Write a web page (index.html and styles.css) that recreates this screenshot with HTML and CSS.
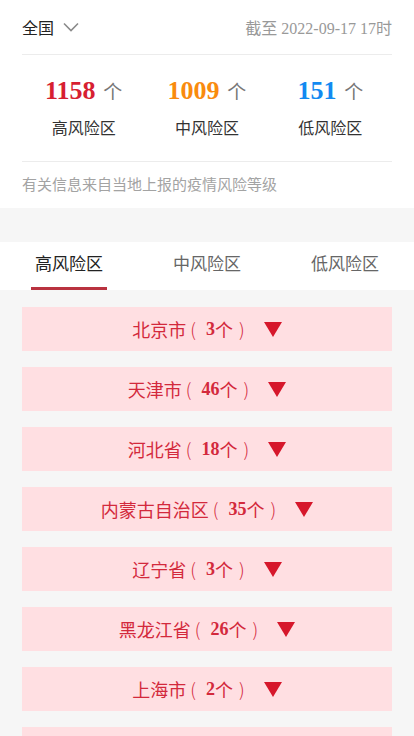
FILE: index.html
```html
<!DOCTYPE html>
<html lang="zh-CN">
<head>
    <meta charset="UTF-8">
    <meta name="viewport" content="width=device-width, initial-scale=1.0">
    <title>风险等级查询</title>
    <link rel="stylesheet" href="styles.css">
</head>
<body>
    <!-- 顶部汇总 -->
    <div class="summary">
        <div class="summary-head">
            <div class="region">全国
                <svg class="chevron" width="16" height="10" viewBox="0 0 16 10"><path d="M1 1.5 L8 8.5 L15 1.5" fill="none" stroke="#8a8a8a" stroke-width="1.6"/></svg>
            </div>
            <div class="update-time">截至 2022-09-17 17时</div>
        </div>
        <div class="stats">
            <div class="stat">
                <div class="stat-num"><b class="high">1158</b> 个</div>
                <div class="stat-label">高风险区</div>
            </div>
            <div class="stat">
                <div class="stat-num"><b class="mid">1009</b> 个</div>
                <div class="stat-label">中风险区</div>
            </div>
            <div class="stat">
                <div class="stat-num"><b class="low">151</b> 个</div>
                <div class="stat-label">低风险区</div>
            </div>
        </div>
        <div class="note">有关信息来自当地上报的疫情风险等级</div>
    </div>

    <!-- 风险等级切换 -->
    <div class="tabs">
        <div class="tab active">高风险区</div>
        <div class="tab">中风险区</div>
        <div class="tab">低风险区</div>
    </div>

    <div class="area-list">
        <div class="area">北京市<span class="open">(</span><b>3</b>个<span class="close">)</span><span class="arrow"></span></div>
        <div class="area">天津市<span class="open">(</span><b>46</b>个<span class="close">)</span><span class="arrow"></span></div>
        <div class="area">河北省<span class="open">(</span><b>18</b>个<span class="close">)</span><span class="arrow"></span></div>
        <div class="area">内蒙古自治区<span class="open">(</span><b>35</b>个<span class="close">)</span><span class="arrow"></span></div>
        <div class="area">辽宁省<span class="open">(</span><b>3</b>个<span class="close">)</span><span class="arrow"></span></div>
        <div class="area">黑龙江省<span class="open">(</span><b>26</b>个<span class="close">)</span><span class="arrow"></span></div>
        <div class="area">上海市<span class="open">(</span><b>2</b>个<span class="close">)</span><span class="arrow"></span></div>
        <div class="area">江苏省<span class="open">(</span><b>9</b>个<span class="close">)</span><span class="arrow"></span></div>
    </div>
</body>
</html>
```

FILE: styles.css
```css
body {
    margin: 0;
    background-color: #f6f6f6;
    font-family: "Liberation Serif", "Noto Sans CJK SC", serif;
    color: #333;
}
.summary {
    background-color: #fff;
    padding: 0 22px;
}
.summary-head {
    display: flex;
    justify-content: space-between;
    align-items: center;
    height: 54px;
    border-bottom: 1px solid #ececec;
}
.region {
    display: flex;
    align-items: center;
    font-size: 16px;
    color: #222;
}
.chevron {
    margin-left: 9px;
}
.update-time {
    font-size: 16px;
    color: #999;
}
.stats {
    display: flex;
    height: 106px;
    border-bottom: 1px solid #ececec;
}
.stat {
    flex: 1;
    text-align: center;
    padding-top: 20px;
}
.stat-num {
    font-size: 19px;
    color: #777;
    line-height: 32px;
}
.stat-num b {
    font-size: 26px;
    margin-right: 3px;
}
.high {
    color: #d71f31;
}
.mid {
    color: #f98b0e;
}
.low {
    color: #138af1;
}
.stat-label {
    margin-top: 6px;
    font-size: 16px;
    color: #333;
}
.note {
    height: 46px;
    line-height: 46px;
    font-size: 15px;
    color: #a3a3a3;
}
.tabs {
    display: flex;
    margin-top: 34px;
    height: 48px;
    background-color: #fff;
}
.tab {
    flex: 1;
    text-align: center;
    line-height: 46px;
    font-size: 17px;
    color: #666;
}
.tab.active {
    color: #222;
    position: relative;
}
.tab.active::after {
    content: "";
    position: absolute;
    left: 31px;
    right: 31px;
    bottom: 0;
    height: 3px;
    background-color: #b9323f;
}
.area-list {
    display: flex;
    flex-direction: column;
    gap: 16px;
    padding: 17px 22px;
}
.area {
    display: flex;
    justify-content: center;
    align-items: center;
    height: 44px;
    background-color: #ffdfe2;
    color: #d3293c;
    font-size: 18px;
}
.open,
.close {
    font-family: "Noto Sans CJK SC", sans-serif;
    font-weight: 300;
}
.open {
    margin: 0 10px 0 4px;
}
.close {
    margin: 0 19px 0 6px;
}
.arrow {
    width: 0;
    height: 0;
    border-left: 9px solid transparent;
    border-right: 9px solid transparent;
    border-top: 15px solid #d6172b;
}
```
